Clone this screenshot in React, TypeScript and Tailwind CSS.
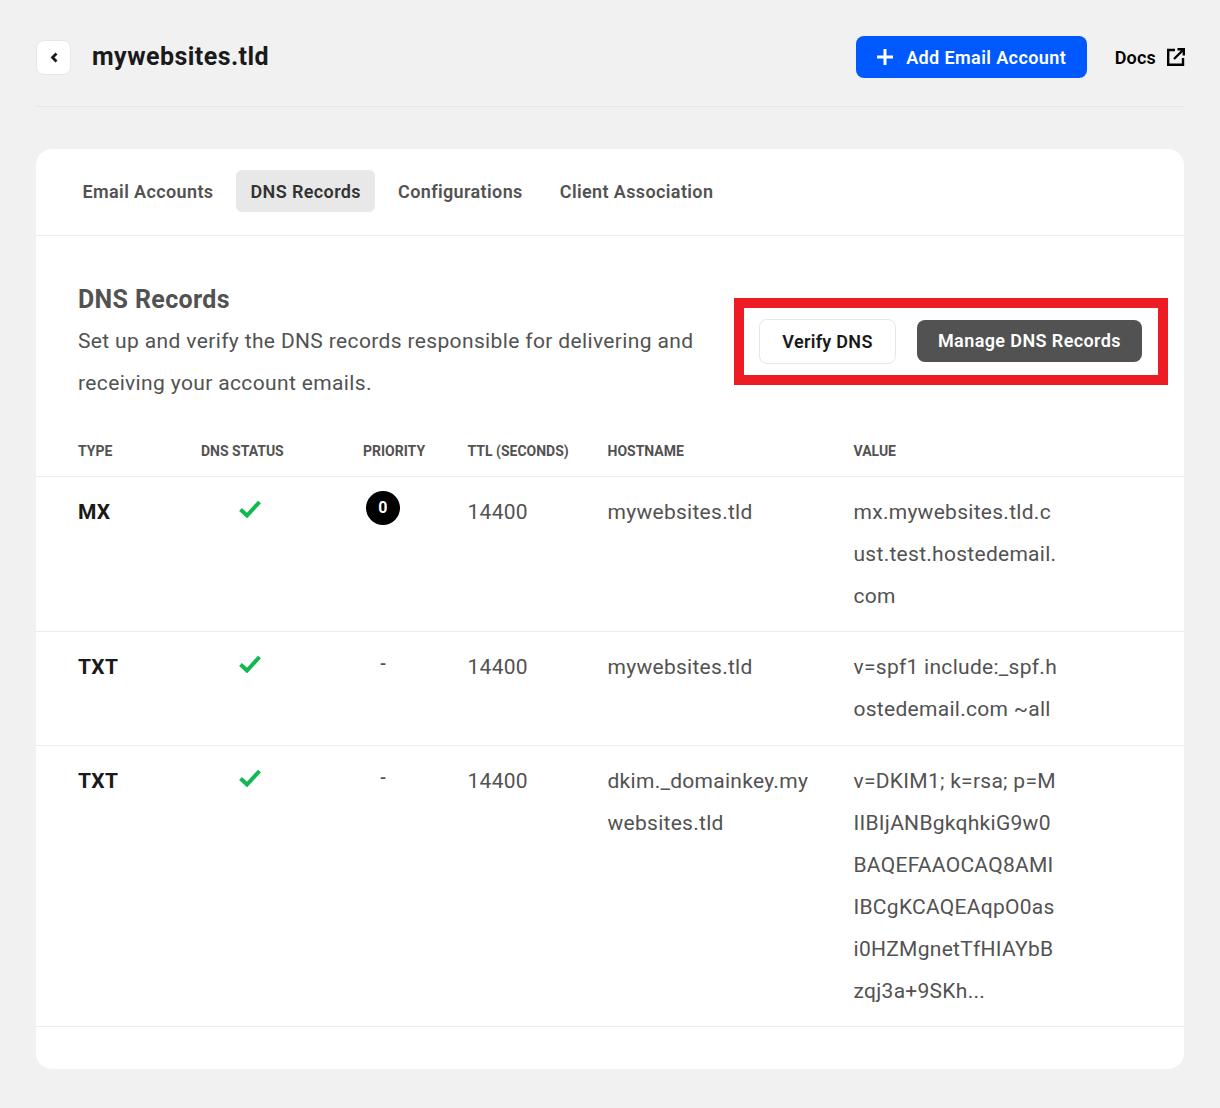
import React from 'react';

type DnsRecord = {
  type: string;
  priority: string | null;
  hostname: string;
  value: string;
  height: string;
};

const RECORDS: DnsRecord[] = [
  { type: 'MX', priority: '0', hostname: 'mywebsites.tld', value: 'mx.mywebsites.tld.cust.test.hostedemail.com', height: 'h-[155px]' },
  { type: 'TXT', priority: null, hostname: 'mywebsites.tld', value: 'v=spf1 include:_spf.hostedemail.com ~all', height: 'h-[114px]' },
  {
    type: 'TXT',
    priority: null,
    hostname: 'dkim._domainkey.mywebsites.tld',
    value: 'v=DKIM1; k=rsa; p=MIIBIjANBgkqhkiG9w0BAQEFAAOCAQ8AMIIBCgKCAQEAqpO0asi0HZMgnetTfHIAYbBzqj3a+9SKh...',
    height: 'h-[281px]',
  },
];

const TABS = ['Email Accounts', 'DNS Records', 'Configurations', 'Client Association'];

const COLS = 'grid grid-cols-[123px_162px_104.5px_140px_246px_1fr]';

const App: React.FC = () => {
  return (
    <div className="min-h-[1108px] bg-[#f1f1f1] px-9 pt-9 font-['Roboto',sans-serif]">
      {/* Page header */}
      <div className="flex h-[71px] items-start justify-between border-b border-[#e7e7e7]">
        <div className="flex items-center">
          <button className="mt-1 flex h-[35px] w-[35px] items-center justify-center rounded-lg border border-[#e7e7e7] bg-white">
            <svg width="8" height="11" viewBox="0 0 8 11" fill="none" stroke="#1a1a1a" strokeWidth="2.8">
              <path d="M6.5 1.5 2.5 5.5 6.5 9.5" />
            </svg>
          </button>
          <h1 className="ml-[21px] mt-[2px] text-[25px] leading-[35px] font-bold tracking-[0.45px] text-[#1a1a1a]">mywebsites.tld</h1>
        </div>
        <div className="-mr-px flex items-center">
          <button className="flex h-[42px] w-[231px] items-center justify-center gap-[12px] rounded-lg bg-[#0059ff] text-[18px] font-semibold tracking-[0.4px] text-white">
            <svg width="18" height="18" viewBox="0 0 18 18" fill="none" stroke="currentColor" strokeWidth="3">
              <path d="M9 1v16M1 9h16" />
            </svg>
            Add Email Account
          </button>
          <a className="ml-7 flex items-center gap-[11px] text-[18px] font-semibold tracking-[0.2px] text-black">
            Docs
            <svg width="18" height="18" viewBox="0 0 18 18" fill="none" stroke="currentColor" strokeWidth="2.4">
              <path d="M8 2H1.2v14.8H16V10" />
              <path d="M7 11 16.5 1.5M10.5 1.2h6.3v6.3" />
            </svg>
          </a>
        </div>
      </div>

      {/* Card */}
      <div className="mt-[42px] h-[920px] rounded-2xl bg-white">
        <div className="flex h-[87px] items-start gap-[8px] border-b border-[#ebebeb] px-[32px] pt-[21px]">
          {TABS.map((tab) => (
            <button
              key={tab}
              className={`flex h-[42px] items-center rounded-md px-[14.5px] text-[18px] font-semibold tracking-[0.38px] ${
                tab === 'DNS Records' ? 'bg-[#e8e8e8] text-[#333333]' : 'text-[#525252]'
              }`}
            >
              {tab}
            </button>
          ))}
        </div>

        <div className="flex items-start justify-between pl-[42px] pr-4">
          <div className="w-[640px] pt-[47px]">
            <h2 className="text-[25px] leading-[34px] font-bold tracking-[0.36px] text-[#525252]">DNS Records</h2>
            <p className="mt-[3px] text-[21px] leading-[42px] tracking-[0.36px] text-[#525252]">
              Set up and verify the DNS records responsible for delivering and receiving your account emails.
            </p>
          </div>
          <div className="mt-[62px] flex h-[87px] w-[434px] items-start gap-[21px] border-10 border-[#ed1c24] pl-[15px] pt-[11px]">
            <button className="h-[45px] w-[137px] rounded-lg border border-[#e7e7e7] bg-white text-[18px] font-semibold tracking-[0.3px] text-[#1a1a1a]">
              Verify DNS
            </button>
            <button className="mt-px h-[42px] w-[225px] rounded-lg bg-[#525252] pb-px text-[18px] font-semibold tracking-[0.4px] text-white">
              Manage DNS Records
            </button>
          </div>
        </div>

        {/* Records table */}
        <div className={`${COLS} mt-[19px] h-[54px] items-center border-b border-[#ebebeb] pt-[4px] pl-[42px] text-[14px] font-bold text-[#525252]`}>
          <div>TYPE</div>
          <div>DNS STATUS</div>
          <div>PRIORITY</div>
          <div>TTL (SECONDS)</div>
          <div>HOSTNAME</div>
          <div>VALUE</div>
        </div>
        {RECORDS.map((r, i) => (
          <div key={i} className={`${COLS} ${r.height} border-b border-[#ebebeb] pl-[42px] pt-[14px] text-[21px] leading-[42px] tracking-[0.28px] text-[#525252]`}>
            <div className="font-bold text-[#1a1a1a]">{r.type}</div>
            <div className="pl-[38px] pt-[9px]">
              <svg width="22" height="18" viewBox="0 0 22 18" fill="none" stroke="#10b94f" strokeWidth="4">
                <path d="M1.5 9.5 8 15.5 20.5 2" />
              </svg>
            </div>
            <div>
              {r.priority !== null ? (
                <span className="ml-[3px] flex h-[34px] w-[34px] items-center justify-center rounded-full bg-black text-[16px] font-bold text-white">
                  {r.priority}
                </span>
              ) : (
                <span className="ml-[17px] block -mt-[3px] text-[18px] font-medium">-</span>
              )}
            </div>
            <div>14400</div>
            <div className="w-[207px] break-all">{r.hostname}</div>
            <div className="w-[204px] break-all">{r.value}</div>
          </div>
        ))}
      </div>
    </div>
  );
};

export default App;
